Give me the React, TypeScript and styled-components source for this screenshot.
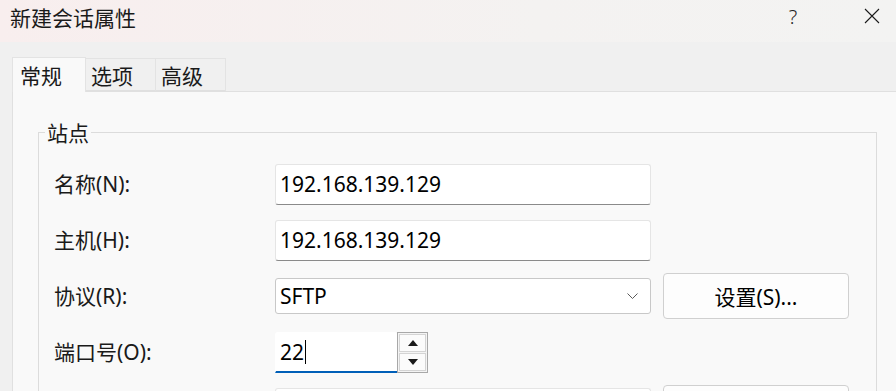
import React from 'react';
import styled, { createGlobalStyle } from 'styled-components';

const GlobalStyle = createGlobalStyle`
  html, body {
    margin: 0;
    padding: 0;
    background: #f0f0f0;
    overflow: hidden;
  }
  body {
    font-family: 'Noto Sans', 'Noto Sans CJK SC', sans-serif;
    color: #1a1a1a;
  }
`;

const Window = styled.div`
  width: 896px;
  height: 391px;
  overflow: hidden;
  background: #f0f0f0;
`;

const TitleBar = styled.div`
  height: 42px;
  display: flex;
  align-items: center;
  padding-left: 10px;
  background: linear-gradient(to right, #f8eeee, #f4f2f1 60%, #f3f3f2);
`;

const Title = styled.div`
  flex: 1;
  font-family: 'Noto Sans CJK SC', sans-serif;
  font-size: 21px;
  line-height: 42px;
  margin-top: -9px;
`;

const Caption = styled.div`
  display: flex;
  gap: 32px;
  margin-top: -10px;
`;

const TitleButton = styled.div<{ $wide?: boolean }>`
  width: ${p => (p.$wide ? '48px' : '46px')};
  height: 42px;
  display: flex;
  align-items: center;
  justify-content: center;
  font-size: 20px;
  font-weight: 300;
  color: #1f1f1f;
`;

const TabStrip = styled.div`
  height: 49px;
  display: flex;
  align-items: flex-end;
  padding-left: 12px;
`;

const Tab = styled.div<{ $active?: boolean }>`
  box-sizing: border-box;
  height: ${p => (p.$active ? '35px' : '33px')};
  padding: 0 ${p => (p.$active ? '7px' : '5px')};
  margin-bottom: ${p => (p.$active ? '-1px' : '0')};
  position: relative;
  z-index: ${p => (p.$active ? 1 : 0)};
  display: flex;
  align-items: center;
  border: 1px solid #e3e3e3;
  border-bottom: ${p => (p.$active ? 'none' : '1px solid #e0e0e0')};
  border-left: ${p => (p.$active ? '1px solid #e3e3e3' : 'none')};
  background: ${p => (p.$active ? '#f9f9f9' : '#f0f0f0')};
  font-family: 'Noto Sans CJK SC', sans-serif;
  font-size: 21px;
  min-width: ${p => (p.$active ? '74px' : '70px')};
`;

const Panel = styled.div`
  margin-left: 12px;
  border: 1px solid #e0e0e0;
  border-right: none;
  background: #f9f9f9;
  height: 320px;
  padding: 26px 0 0 25px;
  box-sizing: border-box;
`;

const Group = styled.fieldset`
  margin: 0;
  width: 839px;
  box-sizing: border-box;
  border: 1px solid #dcdcdc;
  padding: 10px 0 0 15px;
`;

const GroupTitle = styled.legend`
  margin-left: -9px;
  padding: 0 2px;
  font-family: 'Noto Sans CJK SC', sans-serif;
  font-size: 21px;
  line-height: 28px;
`;

const Form = styled.div`
  display: grid;
  grid-template-columns: 209px 376px 186px;
  grid-auto-rows: 56px;
  column-gap: 12px;
  align-items: center;
`;

const Label = styled.div`
  font-size: 21px;
  line-height: 28px;
  white-space: nowrap;
`;

const TextBox = styled.div<{ $focused?: boolean }>`
  box-sizing: border-box;
  height: 41px;
  background: #fff;
  border: 1px solid #e5e5e5;
  border-bottom: ${p => (p.$focused ? '2px solid #005fb8' : '1px solid #8a8a8a')};
  border-radius: 3px;
  ${p => p.$focused && 'border-bottom-left-radius: 0; border-bottom-right-radius: 0;'}
  padding: 0 4px;
  display: flex;
  align-items: center;
  font-size: 21px;
  color: #000;
`;

const Select = styled.div`
  box-sizing: border-box;
  height: 36px;
  background: #fff;
  border: 1px solid #c8c8c8;
  border-radius: 3px;
  padding: 0 12px 0 4px;
  display: flex;
  align-items: center;
  justify-content: space-between;
  font-size: 21px;
  color: #000;
`;

const Button = styled.div`
  box-sizing: border-box;
  height: 46px;
  background: #fdfdfd;
  border: 1px solid #d0d0d0;
  border-radius: 4px;
  display: flex;
  align-items: center;
  justify-content: center;
  font-size: 21px;
  color: #000;
`;

const Spinner = styled.div`
  display: flex;
  width: 153px;
  height: 41px;
`;

const SpinInput = styled(TextBox)`
  width: 122px;
  border-top-color: #fff;
  border-left-color: #fff;
  border-right: none;
`;

const Caret = styled.span`
  display: inline-block;
  width: 1px;
  height: 24px;
  background: #000;
  margin-left: 1px;
`;

const SpinButtons = styled.div`
  box-sizing: border-box;
  width: 31px;
  height: 41px;
  border: 1px solid #a8a8a8;
  display: flex;
  flex-direction: column;
  padding: 1px;
  gap: 1px;
  background: #f4f4f4;
`;

const SpinButton = styled.div`
  flex: 1;
  border: 1px solid #d4d4d4;
  background: #fbfbfb;
  display: flex;
  align-items: center;
  justify-content: center;
`;

const Chevron = () => (
  <svg width="11" height="6" viewBox="0 0 11 6">
    <path d="M0.5 0.5 L5.5 5.5 L10.5 0.5" fill="none" stroke="#5a5a5a" strokeWidth="1" />
  </svg>
);

const Triangle = ({ up }: { up?: boolean }) => (
  <svg width="10" height="6" viewBox="0 0 10 6">
    <path d={up ? 'M0 6 L5 0 L10 6 Z' : 'M0 0 L10 0 L5 6 Z'} fill="#1a1a1a" />
  </svg>
);

const CloseIcon = () => (
  <svg width="16" height="16" viewBox="0 0 16 16">
    <path d="M1 1 L15 15 M15 1 L1 15" stroke="#1a1a1a" strokeWidth="1.1" />
  </svg>
);

const App = () => (
  <>
    <GlobalStyle />
    <Window>
      <TitleBar>
        <Title>新建会话属性</Title>
        <Caption>
          <TitleButton>?</TitleButton>
          <TitleButton $wide>
            <CloseIcon />
          </TitleButton>
        </Caption>
      </TitleBar>
      <TabStrip>
        <Tab $active>常规</Tab>
        <Tab>选项</Tab>
        <Tab>高级</Tab>
      </TabStrip>
      <Panel>
        <Group>
          <GroupTitle>站点</GroupTitle>
          <Form>
            <Label>名称(N):</Label>
            <TextBox>192.168.139.129</TextBox>
            <span />

            <Label>主机(H):</Label>
            <TextBox>192.168.139.129</TextBox>
            <span />

            <Label>协议(R):</Label>
            <Select>
              SFTP
              <Chevron />
            </Select>
            <Button>设置(S)...</Button>

            <Label>端口号(O):</Label>
            <Spinner>
              <SpinInput $focused>
                22
                <Caret />
              </SpinInput>
              <SpinButtons>
                <SpinButton>
                  <Triangle up />
                </SpinButton>
                <SpinButton>
                  <Triangle />
                </SpinButton>
              </SpinButtons>
            </Spinner>
            <span />

            <span />
            <TextBox />
            <Button />
          </Form>
        </Group>
      </Panel>
    </Window>
  </>
);

export default App;
